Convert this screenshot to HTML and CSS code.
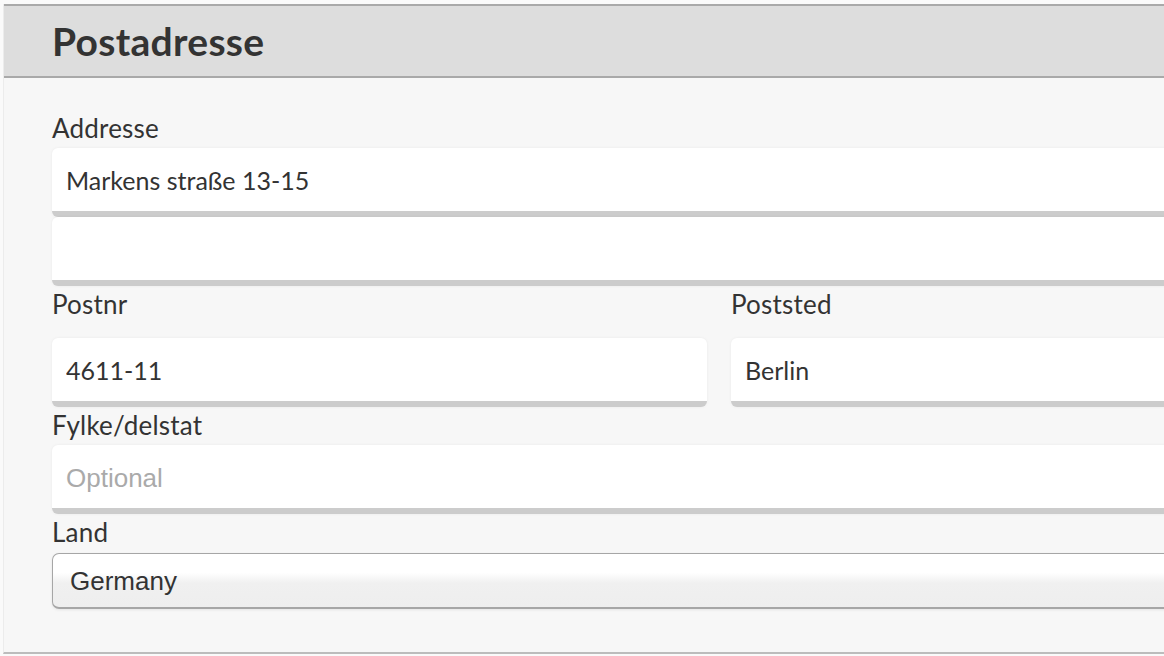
FILE: index.html
```html
<!DOCTYPE html>
<html lang="de">
<head>
<meta charset="utf-8">
<title>Postadresse</title>
<link rel="stylesheet" href="styles.css">
</head>
<body>
<section class="panel">
  <header class="panel-head">
    <h2 class="panel-title">Postadresse</h2>
  </header>
  <div class="panel-body">
    <div class="field">
      <label class="label" for="a1">Addresse</label>
      <input class="input" id="a1" type="text" value="Markens straße 13-15">
      <input class="input" id="a2" type="text" value="">
    </div>
    <div class="row">
      <div class="field">
        <label class="label label-spaced" for="zip">Postnr</label>
        <input class="input" id="zip" type="text" value="4611-11">
      </div>
      <div class="field">
        <label class="label label-spaced" for="city">Poststed</label>
        <input class="input" id="city" type="text" value="Berlin">
      </div>
    </div>
    <div class="field">
      <label class="label" for="state">Fylke/delstat</label>
      <input class="input" id="state" type="text" placeholder="Optional">
    </div>
    <div class="field">
      <label class="label" for="country">Land</label>
      <select class="select" id="country">
        <option>Germany</option>
      </select>
    </div>
  </div>
</section>
</body>
</html>
```

FILE: styles.css
```css
html, body {
  margin: 0;
  padding: 0;
  overflow: hidden;
  background: #fafafa;
}

body {
  font-family: Lato, "Noto Sans", sans-serif;
  color: #333;
  padding: 4px 0 0 3px;
}

.panel {
  width: 1431px;
  background: #f7f7f7;
  border-left: 1px solid #ececec;
  border-bottom: 2px solid #bcbcbc;
}

.panel-head {
  background: #dddddd;
  border-top: 2px solid #a9a9a9;
  border-bottom: 2px solid #a9a9a9;
  height: 70px;
  display: flex;
  align-items: center;
  padding-left: 48px;
}

.panel-title {
  margin: 0;
  font-size: 39px;
  font-weight: 700;
  color: #333;
  letter-spacing: 0.3px;
}

.panel-body {
  padding: 36px 0 43px 48px;
  display: flex;
  flex-direction: column;
  gap: 4px;
}

.field {
  display: flex;
  flex-direction: column;
}

.row {
  display: grid;
  grid-template-columns: 655px 655px;
  column-gap: 24px;
}

.label {
  display: block;
  font-size: 26px;
  line-height: 28px;
  margin-bottom: 6px;
  color: #333;
  letter-spacing: 0.2px;
}

.label-spaced {
  margin-bottom: 20px;
}

.input {
  box-sizing: border-box;
  height: 69px;
  width: 100%;
  margin: 0;
  padding: 0 14px;
  border: none;
  border-bottom: 6px solid #cccccc;
  border-radius: 6px;
  background: #fff;
  box-shadow: 0 0 3px rgba(0, 0, 0, 0.06);
  font-family: Lato, "Noto Sans", sans-serif;
  font-size: 25px;
  color: #333;
  outline: none;
}

.input::placeholder {
  font-family: "Liberation Sans", Arial, sans-serif;
  font-size: 26px;
  color: #aaa;
}

.select {
  box-sizing: border-box;
  -webkit-appearance: none;
  appearance: none;
  height: 56px;
  width: 100%;
  margin: 1px 0 0;
  padding: 0 17px;
  border: 1px solid #a6a6a6;
  border-bottom-width: 2px;
  border-radius: 7px;
  background: linear-gradient(to bottom, #ffffff 0%, #ffffff 35%, #f0f0f0 55%, #eeeeee 100%);
  box-shadow: 0 1px 3px rgba(0, 0, 0, 0.08);
  font-family: "Liberation Sans", Arial, sans-serif;
  font-size: 26px;
  color: #333;
}
```
